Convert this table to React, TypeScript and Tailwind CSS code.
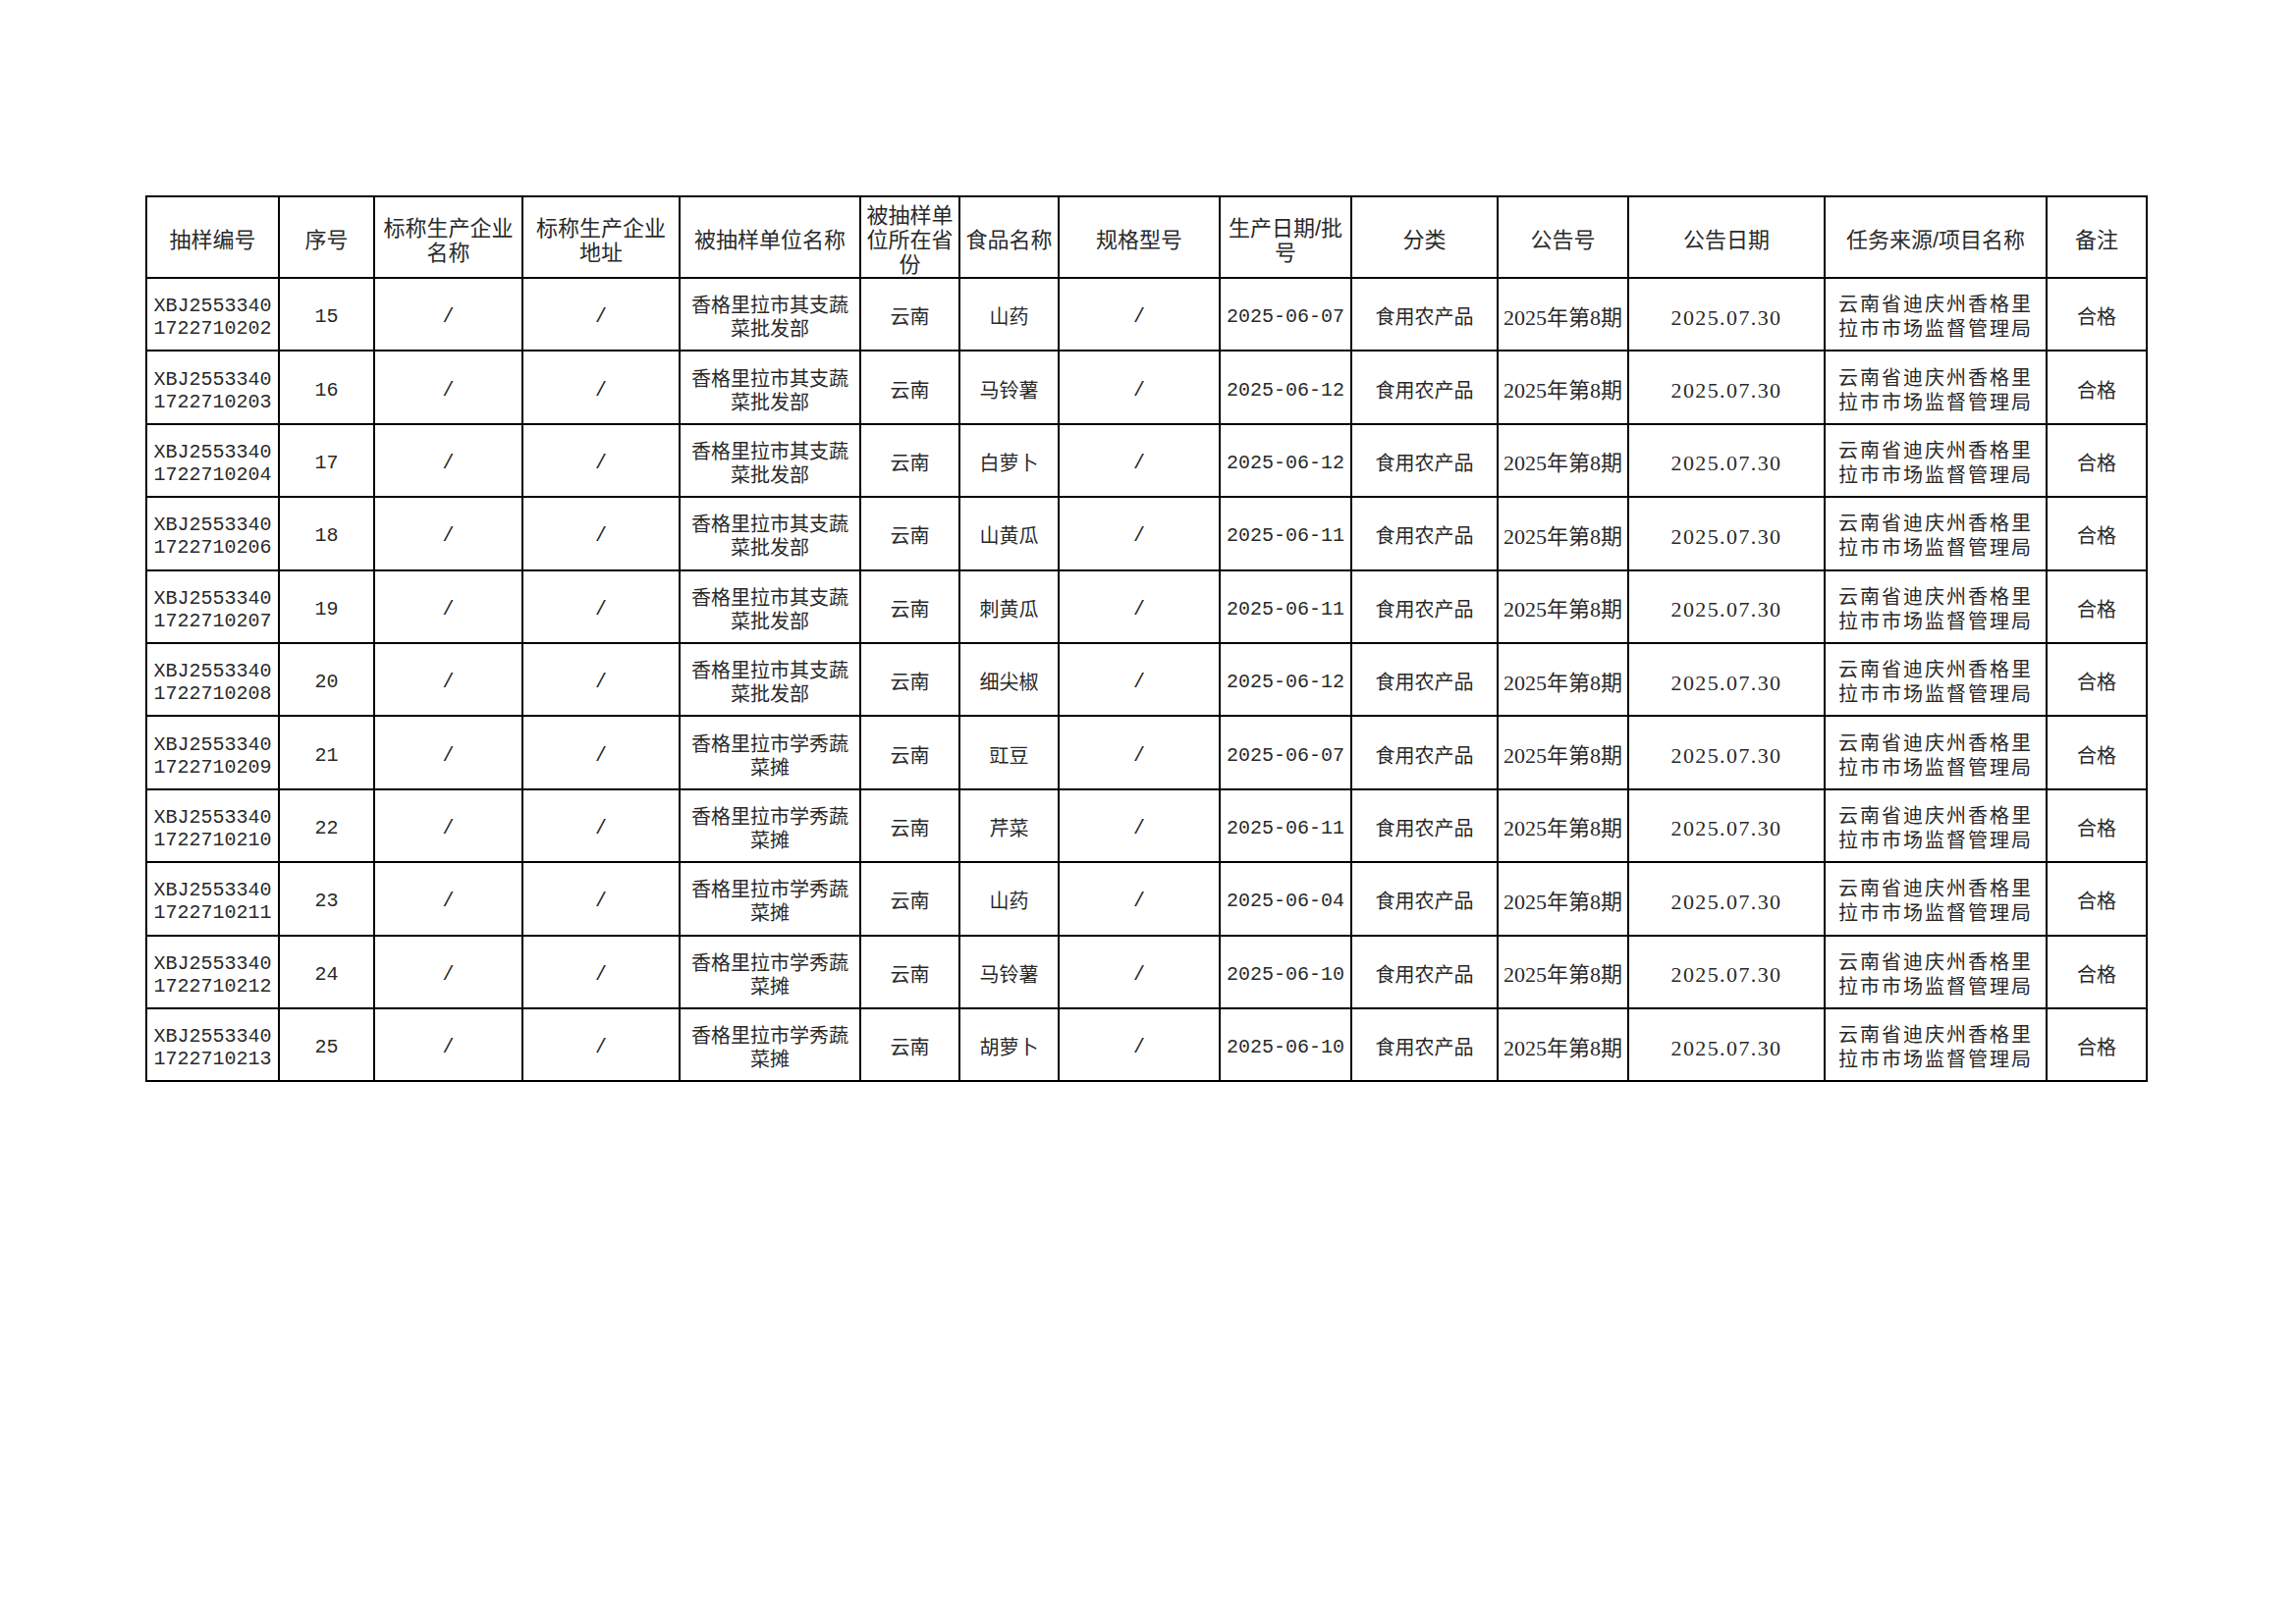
import React from 'react';

type Row = {
    code: [string, string];
    seq: number;
    unit: [string, string];
    food: string;
    date: string;
};

const QIZHI: [string, string] = ['香格里拉市其支蔬', '菜批发部'];
const XUEXIU: [string, string] = ['香格里拉市学秀蔬', '菜摊'];

const rows: Row[] = [
    { code: ['XBJ2553340', '1722710202'], seq: 15, unit: QIZHI, food: '山药', date: '2025-06-07' },
    { code: ['XBJ2553340', '1722710203'], seq: 16, unit: QIZHI, food: '马铃薯', date: '2025-06-12' },
    { code: ['XBJ2553340', '1722710204'], seq: 17, unit: QIZHI, food: '白萝卜', date: '2025-06-12' },
    { code: ['XBJ2553340', '1722710206'], seq: 18, unit: QIZHI, food: '山黄瓜', date: '2025-06-11' },
    { code: ['XBJ2553340', '1722710207'], seq: 19, unit: QIZHI, food: '刺黄瓜', date: '2025-06-11' },
    { code: ['XBJ2553340', '1722710208'], seq: 20, unit: QIZHI, food: '细尖椒', date: '2025-06-12' },
    { code: ['XBJ2553340', '1722710209'], seq: 21, unit: XUEXIU, food: '豇豆', date: '2025-06-07' },
    { code: ['XBJ2553340', '1722710210'], seq: 22, unit: XUEXIU, food: '芹菜', date: '2025-06-11' },
    { code: ['XBJ2553340', '1722710211'], seq: 23, unit: XUEXIU, food: '山药', date: '2025-06-04' },
    { code: ['XBJ2553340', '1722710212'], seq: 24, unit: XUEXIU, food: '马铃薯', date: '2025-06-10' },
    { code: ['XBJ2553340', '1722710213'], seq: 25, unit: XUEXIU, food: '胡萝卜', date: '2025-06-10' },
];

// header labels, already split where the reference wraps them
const headers: string[][] = [
    ['抽样编号'],
    ['序号'],
    ['标称生产企业', '名称'],
    ['标称生产企业', '地址'],
    ['被抽样单位名称'],
    ['被抽样单', '位所在省', '份'],
    ['食品名称'],
    ['规格型号'],
    ['生产日期/批', '号'],
    ['分类'],
    ['公告号'],
    ['公告日期'],
    ['任务来源/项目名称'],
    ['备注'],
];

const colWidths = [
    'w-[135px]', 'w-[97px]', 'w-[151px]', 'w-[160px]', 'w-[184px]', 'w-[101px]', 'w-[101px]',
    'w-[164px]', 'w-[134px]', 'w-[149px]', 'w-[133px]', 'w-[200px]', 'w-[226px]', 'w-[102px]',
];

const cjk = "font-['Liberation_Sans','Noto_Sans_CJK_SC',sans-serif]";
const mono = "font-['Liberation_Mono','DejaVu_Sans_Mono',monospace]";
const serif = "font-['Liberation_Serif','Noto_Sans_CJK_SC',serif]";

const cell = 'border-2 border-black px-0 pb-0 pt-[6px] text-center align-middle';

const Lines = ({ lines }: { lines: string[] }) => (
    <>
        {lines.map((l, i) => (
            <div key={i}>{l}</div>
        ))}
    </>
);

const Slash = () => <span className={`${mono} text-[20px]`}>/</span>;

const App: React.FC = () => {
    return (
        <div className="min-h-screen w-full bg-white pl-[148px] pt-[199px] text-[#2a2a2a]">
            <table className="table-fixed border-collapse w-[2037px]">
                <colgroup>
                    {colWidths.map((w, i) => (
                        <col key={i} className={w} />
                    ))}
                </colgroup>
                <thead>
                    <tr className="h-[83px]">
                        {headers.map((h, i) => (
                            <th key={i} className={`${cell} ${cjk} font-normal text-[22px] leading-[25px]`}>
                                <Lines lines={h} />
                            </th>
                        ))}
                    </tr>
                </thead>
                <tbody>
                    {rows.map(r => (
                        <tr key={r.seq} className="h-[74.4px]">
                            <td className={`${cell} ${mono} text-[20px] leading-[23px]`}>
                                <Lines lines={r.code} />
                            </td>
                            <td className={`${cell} ${mono} text-[20px]`}>{r.seq}</td>
                            <td className={cell}><Slash /></td>
                            <td className={cell}><Slash /></td>
                            <td className={`${cell} ${cjk} text-[20px] leading-[24px]`}>
                                <Lines lines={r.unit} />
                            </td>
                            <td className={`${cell} ${cjk} text-[20px]`}>云南</td>
                            <td className={`${cell} ${cjk} text-[20px]`}>{r.food}</td>
                            <td className={cell}><Slash /></td>
                            <td className={`${cell} ${mono} text-[20px]`}>{r.date}</td>
                            <td className={`${cell} ${cjk} text-[20px]`}>食用农产品</td>
                            <td className={`${cell} ${serif} text-[22px] whitespace-nowrap`}>2025年第8期</td>
                            <td className={`${cell} ${serif} text-[22px] tracking-[1.4px]`}>2025.07.30</td>
                            <td className={`${cell} ${cjk} text-[20px] leading-[25px] tracking-[2px]`}>
                                <Lines lines={['云南省迪庆州香格里', '拉市市场监督管理局']} />
                            </td>
                            <td className={`${cell} ${cjk} text-[20px]`}>合格</td>
                        </tr>
                    ))}
                </tbody>
            </table>
        </div>
    );
};

export default App;
